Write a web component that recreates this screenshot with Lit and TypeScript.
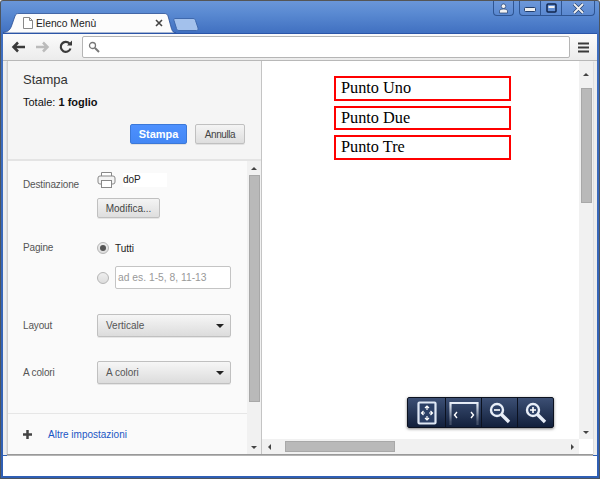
import { LitElement, html, css } from "lit";
import { customElement } from "lit/decorators.js";

const sans = css`"Liberation Sans", Arial, sans-serif`;

@customElement("app-root")
export class AppRoot extends LitElement {
  static styles = css`
    :host { display: block; width: 600px; height: 479px; overflow: hidden; font-family: ${sans}; font-size: 10px; color: #333; }
    * { box-sizing: border-box; }
    .window { width: 600px; height: 479px; display: flex; flex-direction: column; border: 1px solid #4c5560; border-top-color: #555; background: linear-gradient(180deg, #6a96d8 0, #5a8ad2 12px, #3f6fc0 33px, #2f5fb4 100%); padding: 0 2px 2px; border-radius: 3px 3px 0 0; }
    .titlebar { height: 32px; flex: none; display: flex; align-items: flex-start; }
    .tab { width: 173px; height: 20px; margin-top: 12px; position: relative; display: flex; align-items: center; padding: 0 0 0 20px; color: #222; font-size: 10.3px; flex: none; }
    .tab-shape { position: absolute; left: 0; top: 0; }
    .tab-icon, .tab-title, .tab-close { position: relative; }
    .tab-icon { width: 10px; height: 12px; margin-right: 3px; }
    .tab-title { flex: 1; white-space: nowrap; }
    .tab-close { width: 8px; height: 8px; margin-right: 13px; }
    .newtab { width: 26px; height: 13px; margin: 17px 0 0 -3px; flex: none; }
    .caption { margin-left: auto; display: flex; gap: 5px; margin-right: 2px; }
    .capgroup { display: flex; height: 15px; border: 1px solid #2f5592; border-top: none; border-radius: 0 0 4px 4px; background: linear-gradient(180deg, #6d98da, #5a88d0); }
    .capbtn { display: flex; align-items: center; justify-content: center; height: 14px; border-left: 1px solid #2f5592; }
    .capbtn:first-child { border-left: none; }
    .cap-user { width: 19px; }
    .cap-min { width: 20px; }
    .cap-max { width: 21px; }
    .cap-close { width: 33px; }
    .min-glyph { margin-top: 4px; }
    .toolbar { height: 27px; flex: none; display: flex; align-items: center; background: linear-gradient(180deg, #fbfbfb, #ececec); padding: 0 0 0 8px; border-top: 1px solid #2b55a8; }
    .nav { height: 16px; display: flex; align-items: center; justify-content: flex-start; flex: none; width: 24px; }
    .nav.reload { width: 23px; }
    .omni { flex: 1; height: 22px; background: #fff; border: 1px solid #b5b5b5; border-radius: 2px; display: flex; align-items: center; padding-left: 5px; }
    .menu { width: 27px; display: flex; justify-content: center; flex: none; }
    .content { height: 395px; flex: none; display: flex; padding-left: 4px; padding-right: 4px; border-top: 1px solid #b8b8b8; background: #ededed; }
    .content-inner { flex: 1; display: flex; background: #fff; box-shadow: 0 1px 1px #999, 0 2px 0 #bbb; height: 393px; }
    .sidebar { width: 255px; flex: none; display: flex; flex-direction: column; background: #f5f5f5; border-right: 1px solid #c4c4c4; border-left: 1px solid #cfcfcf; }
    .side-head { height: 100px; flex: none; padding: 11px 16px 0 15px; border-bottom: 2px solid #e4e4e4; display: flex; flex-direction: column; }
    .side-title { font-size: 13px; color: #333; line-height: 16px; }
    .total { font-size: 11px; line-height: 14px; margin-top: 7px; color: #111; }
    .head-actions { display: flex; justify-content: flex-end; gap: 8px; margin-top: 15px; }
    .btn { height: 20px; border: 1px solid #c0c0c0; border-radius: 2px; background: linear-gradient(180deg, #f4f4f4, #dedede); font-size: 10px; color: #444; display: flex; align-items: center; justify-content: center; box-shadow: 0 1px 0 rgba(0,0,0,.08); }
    .btn.primary { width: 57px; background: linear-gradient(180deg, #4d90fe, #4387f5); border-color: #3b78d8; color: #fff; font-weight: bold; font-size: 11px; }
    .btn.cancel { width: 50px; letter-spacing: -.4px; }
    .btn.edit { width: 63px; }
    .side-mid { flex: 1; display: flex; min-height: 0; background: #fafafa; }
    .settings { flex: 1; display: flex; flex-direction: column; padding-left: 15px; }
    .row { display: flex; }
    .lbl { width: 74px; flex: none; color: #555; font-size: 10px; letter-spacing: -.15px; line-height: 14px; }
    .dest { height: 80px; padding-top: 9px; }
    .dest .lbl { padding-top: 8px; }
    .dest-top { display: flex; align-items: center; height: 20px; margin-bottom: 8px; }
    .printer-name { margin-left: 7px; width: 44px; height: 14px; background: #fff; color: #222; line-height: 14px; font-size: 10px; }
    .pages { height: 61px; }
    .radio-row { display: flex; align-items: center; height: 14px; gap: 6px; color: #222; }
    .radio { width: 12px; height: 12px; border-radius: 50%; border: 1px solid #b5b5b5; background: linear-gradient(180deg, #eee, #ddd); display: flex; align-items: center; justify-content: center; flex: none; }
    .dot { width: 6px; height: 6px; border-radius: 50%; background: #555; }
    .radio-row.second { height: 23px; margin-top: 11px; }
    .pinput { width: 116px; height: 23px; border: 1px solid #c4c4c4; border-radius: 2px; background: #fff; color: #999; padding-left: 2px; line-height: 21px; white-space: nowrap; font-size: 10.3px; }
    .sel-row { align-items: center; height: 47px; }
    .select { width: 134px; height: 23px; border: 1px solid #c0c0c0; border-radius: 2px; background: linear-gradient(180deg, #f6f6f6, #dcdcdc); display: flex; align-items: center; justify-content: space-between; padding: 0 6px 0 8px; color: #555; box-shadow: 0 1px 0 rgba(0,0,0,.08); }
    .caret { width: 0; height: 0; border-left: 4px solid transparent; border-right: 4px solid transparent; border-top: 4px solid #222; }
    .more { flex: none; height: 41px; margin-top: auto; margin-left: -15px; padding-left: 15px; border-top: 1px solid #e6e6e6; display: flex; align-items: center; gap: 16px; color: #1a56c4; font-size: 10px; }
    .vscroll { width: 14px; flex: none; display: flex; flex-direction: column; background: #f1f1f1; align-items: center; }
    .arrow { height: 14px; flex: none; display: flex; align-items: center; justify-content: center; }
    .arrow.first { height: 27px; }
    .up { width: 0; height: 0; border-left: 3px solid transparent; border-right: 3px solid transparent; border-bottom: 3px solid #444; }
    .down { width: 0; height: 0; border-left: 3px solid transparent; border-right: 3px solid transparent; border-top: 3px solid #444; }
    .left { width: 0; height: 0; border-top: 3px solid transparent; border-bottom: 3px solid transparent; border-right: 3px solid #444; }
    .right { width: 0; height: 0; border-top: 3px solid transparent; border-bottom: 3px solid transparent; border-left: 3px solid #444; }
    .thumb { width: 11px; background: #b9b9b9; border: 1px solid #a8a8a8; flex: none; }
    .thumb.side { height: 227px; }
    .thumb.main { height: 115px; }
    .grow { flex: 1; }
    .preview { flex: 1; display: flex; flex-direction: column; min-width: 0; }
    .preview-top { flex: 1; display: flex; min-height: 0; }
    .page { flex: 1; position: relative; background: #fff; padding: 15px 0 0 72px; display: flex; flex-direction: column; gap: 5px; }
    .item { width: 177px; height: 24.5px; border: 2px solid #f00; font-family: "Liberation Serif", "Times New Roman", serif; font-size: 16.3px; color: #000; padding-left: 5px; line-height: 20px; }
    .zoombar { position: absolute; left: 145px; top: 336px; display: flex; height: 31px; background: linear-gradient(180deg, #3c4f74, #12203c); border: 1px solid #0c1220; border-radius: 2px; box-shadow: 0 1px 3px rgba(0,0,0,.5); }
    .zb { width: 36px; display: flex; align-items: center; justify-content: center; border-left: 1px solid #0c1220; }
    .zb:first-child { border-left: none; width: 37px; }
    .hscroll { height: 15px; flex: none; display: flex; align-items: center; background: #f1f1f1; margin-right: 14px; }
    .hscroll .arrow { width: 14px; height: 15px; }
    .hspace { flex: 1; display: flex; align-items: center; padding-left: 9px; }
    .hthumb { width: 110px; height: 11px; background: #b9b9b9; border: 1px solid #a8a8a8; }
    .bottom { flex: 1; background: #fff; margin-top: 1px; }
  `;

  render() {
    return html`<div class="window">
      <div class="titlebar">
        <div class="tab">
          <svg class="tab-shape" width="173" height="20" viewBox="0 0 173 20"><path d="M0 19.500 C5 19 7 17 8.500 13 L12 3 C12.800 1 13.800 .5 16 .5 L161 .5 C163.500 .5 164.500 1 165.300 4 L168 14 C169 18 170 19.500 173 20 L0 20Z" fill="#fcfcfc" stroke="#2a4f96" stroke-width=".8"/></svg>
          <svg class="tab-icon" viewBox="0 0 10 12"><path d="M.5.5H6.500L9.500 3.500V11.500H.5Z M6.500.5V3.500H9.500" fill="#fff" stroke="#888"/></svg>
          <span class="tab-title">Elenco Menù</span>
          <svg class="tab-close" viewBox="0 0 8 8"><path d="M1 1L7 7M7 1L1 7" stroke="#444" stroke-width="1.600"/></svg>
        </div>
        <svg class="newtab" viewBox="0 0 26 13"><path d="M2 .5H20C21.500.5 22 1 22.500 2.500L25 10C25.300 11.500 25 12.500 23.500 12.500H6C4.500 12.500 4 12 3.500 10.500L1 2.500C.7 1 1 .5 2 .5Z" fill="#a3c1ec" stroke="#3f69ad"/></svg>
        <div class="caption">
          <div class="capgroup"><div class="capbtn cap-user"><svg width="11" height="11" viewBox="0 0 11 11"><circle cx="5.500" cy="3.200" r="2.300" fill="#f2f2f2" stroke="#24406e" stroke-width=".7"/><path d="M1.500 10V8C1.500 6.800 3 6 5.500 6S9.500 6.800 9.500 8V10Z" fill="#f2f2f2" stroke="#24406e" stroke-width=".7"/></svg></div></div>
          <div class="capgroup">
            <div class="capbtn cap-min"><svg class="min-glyph" width="12" height="6" viewBox="0 0 12 6"><rect x=".5" y=".5" width="11" height="4" rx="1" fill="#f0f0f0" stroke="#24406e"/></svg></div>
            <div class="capbtn cap-max"><svg width="11" height="10" viewBox="0 0 11 10"><rect x="1" y="1" width="9" height="8" rx="1" fill="none" stroke="#10264d" stroke-width="1.500"/><rect x="2.500" y="3" width="6" height="2" fill="#f0f0f0"/></svg></div>
            <div class="capbtn cap-close"><svg width="13" height="11" viewBox="0 0 13 11"><path d="M2 1L11 10M11 1L2 10" stroke="#24406e" stroke-width="3.200"/><path d="M2 1L11 10M11 1L2 10" stroke="#f0f0f0" stroke-width="1.800"/></svg></div>
          </div>
        </div>
      </div>
      <div class="toolbar">
        <div class="nav"><svg width="15" height="12" viewBox="0 0 15 12"><path d="M14 6H4M7 1.500L2.500 6L7 10.500" fill="none" stroke="#3a3a3a" stroke-width="2.500"/></svg></div>
        <div class="nav"><svg width="15" height="12" viewBox="0 0 15 12"><path d="M1 6H11M8 1.500L12.500 6L8 10.500" fill="none" stroke="#bbb" stroke-width="2.500"/></svg></div>
        <div class="nav reload"><svg width="14" height="14" viewBox="0 0 14 14"><path d="M11.500 8.500A5 5 0 1 1 10.500 3.500" fill="none" stroke="#3a3a3a" stroke-width="2.200"/><path d="M8 5.500H13V.5Z" fill="#3a3a3a"/></svg></div>
        <div class="omni"><svg width="12" height="12" viewBox="0 0 12 12"><circle cx="4.500" cy="4.500" r="3" fill="none" stroke="#777" stroke-width="1.300"/><path d="M7 7L11 11" stroke="#777" stroke-width="2"/></svg></div>
        <div class="menu"><svg width="11" height="11" viewBox="0 0 11 11"><path d="M0 1.500H11M0 5.500H11M0 9.500H11" stroke="#3a3a3a" stroke-width="2"/></svg></div>
      </div>
      <div class="content">
        <div class="content-inner">
          <div class="sidebar">
            <div class="side-head">
              <div class="side-title">Stampa</div>
              <div class="total">Totale: <b>1 foglio</b></div>
              <div class="head-actions"><div class="btn primary">Stampa</div><div class="btn cancel">Annulla</div></div>
            </div>
            <div class="side-mid">
              <div class="settings">
                <div class="row dest">
                  <div class="lbl">Destinazione</div>
                  <div>
                    <div class="dest-top">
                      <svg width="19" height="18" viewBox="0 0 19 18"><path d="M4.500 5V1.500H14.500V5" fill="#fff" stroke="#888"/><rect x="1" y="5" width="17" height="8" rx="2" fill="#f4f4f4" stroke="#888"/><rect x="4.500" y="9.500" width="10" height="7" fill="#fff" stroke="#888"/></svg>
                      <div class="printer-name">doP</div>
                    </div>
                    <div class="btn edit">Modifica...</div>
                  </div>
                </div>
                <div class="row pages">
                  <div class="lbl">Pagine</div>
                  <div>
                    <div class="radio-row"><div class="radio"><div class="dot"></div></div>Tutti</div>
                    <div class="radio-row second"><div class="radio"></div><div class="pinput">ad es. 1-5, 8, 11-13</div></div>
                  </div>
                </div>
                <div class="row sel-row"><div class="lbl">Layout</div><div class="select">Verticale<span class="caret"></span></div></div>
                <div class="row sel-row"><div class="lbl">A colori</div><div class="select">A colori<span class="caret"></span></div></div>
                <div class="more"><svg width="9" height="9" viewBox="0 0 9 9"><path d="M4.500 0V9M0 4.500H9" stroke="#444" stroke-width="2.500"/></svg>Altre impostazioni</div>
              </div>
              <div class="vscroll">
                <div class="arrow"><span class="up"></span></div>
                <div class="thumb side"></div>
                <div class="grow"></div>
                <div class="arrow"><span class="down"></span></div>
              </div>
            </div>
          </div>
          <div class="preview">
            <div class="preview-top">
              <div class="page">
                <div class="item">Punto Uno</div>
                <div class="item">Punto Due</div>
                <div class="item">Punto Tre</div>
                <div class="zoombar">
                  <div class="zb"><svg width="20" height="24" viewBox="0 0 20 24"><rect x="1.500" y="1.500" width="17" height="21" rx="1" fill="#2c4066" stroke="#dfe8f5" stroke-width="2.200"/><path d="M10 5V9M8 7L10 5L12 7M10 19V15M8 17L10 19L12 17M4.500 12H8M6.500 10L4.500 12L6.500 14M15.500 12H12M13.500 10L15.500 12L13.500 14" fill="none" stroke="#fff" stroke-width="1.200"/></svg></div>
                  <div class="zb"><svg width="30" height="24" viewBox="0 0 30 24"><defs><linearGradient id="fade" x1="0" y1="0" x2="0" y2="1"><stop offset="0" stop-color="#e8eef8"/><stop offset=".85" stop-color="#e8eef8" stop-opacity=".2"/></linearGradient></defs><path d="M1.500 24V2H28.500V24" fill="none" stroke="url(#fade)" stroke-width="2.200"/><path d="M8 11L5.500 14L8 17M22 11L24.500 14L22 17" fill="none" stroke="#fff" stroke-width="1.400"/></svg></div>
                  <div class="zb"><svg width="22" height="22" viewBox="0 0 22 22"><circle cx="8" cy="8" r="6" fill="#2c4066" stroke="#e8eef8" stroke-width="2.400"/><path d="M5 8H11" stroke="#fff" stroke-width="1.600"/><path d="M12.500 12.500L20 20" stroke="#e8eef8" stroke-width="3.400"/></svg></div>
                  <div class="zb"><svg width="22" height="22" viewBox="0 0 22 22"><circle cx="8" cy="8" r="6" fill="#2c4066" stroke="#e8eef8" stroke-width="2.400"/><path d="M5 8H11M8 5V11" stroke="#fff" stroke-width="1.600"/><path d="M12.500 12.500L20 20" stroke="#e8eef8" stroke-width="3.400"/></svg></div>
                </div>
              </div>
              <div class="vscroll">
                <div class="arrow first"><span class="up"></span></div>
                <div class="thumb main"></div>
                <div class="grow"></div>
                <div class="arrow"><span class="down"></span></div>
              </div>
            </div>
            <div class="hscroll">
              <div class="arrow"><span class="left"></span></div>
              <div class="hspace"><div class="hthumb"></div></div>
              <div class="arrow"><span class="right"></span></div>
            </div>
          </div>
        </div>
      </div>
      <div class="bottom"></div>
    </div>`;
  }
}
